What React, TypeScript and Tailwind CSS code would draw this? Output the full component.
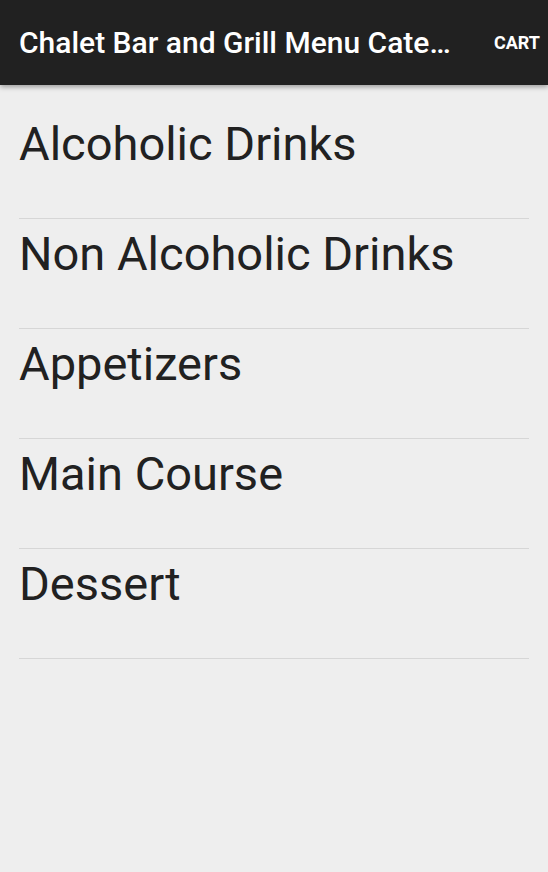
const categories = ['Alcoholic Drinks', 'Non Alcoholic Drinks', 'Appetizers', 'Main Course', 'Dessert']

export default function App() {
  return (
    <div className="h-[872px] w-[548px] overflow-hidden bg-[#eeeeee] font-['Roboto',sans-serif]">
      <header className="relative z-10 flex h-[85px] items-center bg-[#212121] pl-[19px] pr-[8px] shadow-[0_2px_5px_rgba(0,0,0,0.35)]">
        <h1 className="min-w-0 flex-1 truncate text-[30px] font-medium text-white">
          Chalet Bar and Grill Menu Categories
        </h1>
        <button className="ml-[36px] text-[18px] font-bold text-white">CART</button>
      </header>
      <ul className="pt-[24px] pr-[19px] pl-[19px]">
        {categories.map((c) => (
          <li key={c} className="h-[110px] border-b border-[#d6d6d6] pt-[7px] text-[47px] leading-[56px] text-[#212121]">
            {c}
          </li>
        ))}
      </ul>
    </div>
  )
}
